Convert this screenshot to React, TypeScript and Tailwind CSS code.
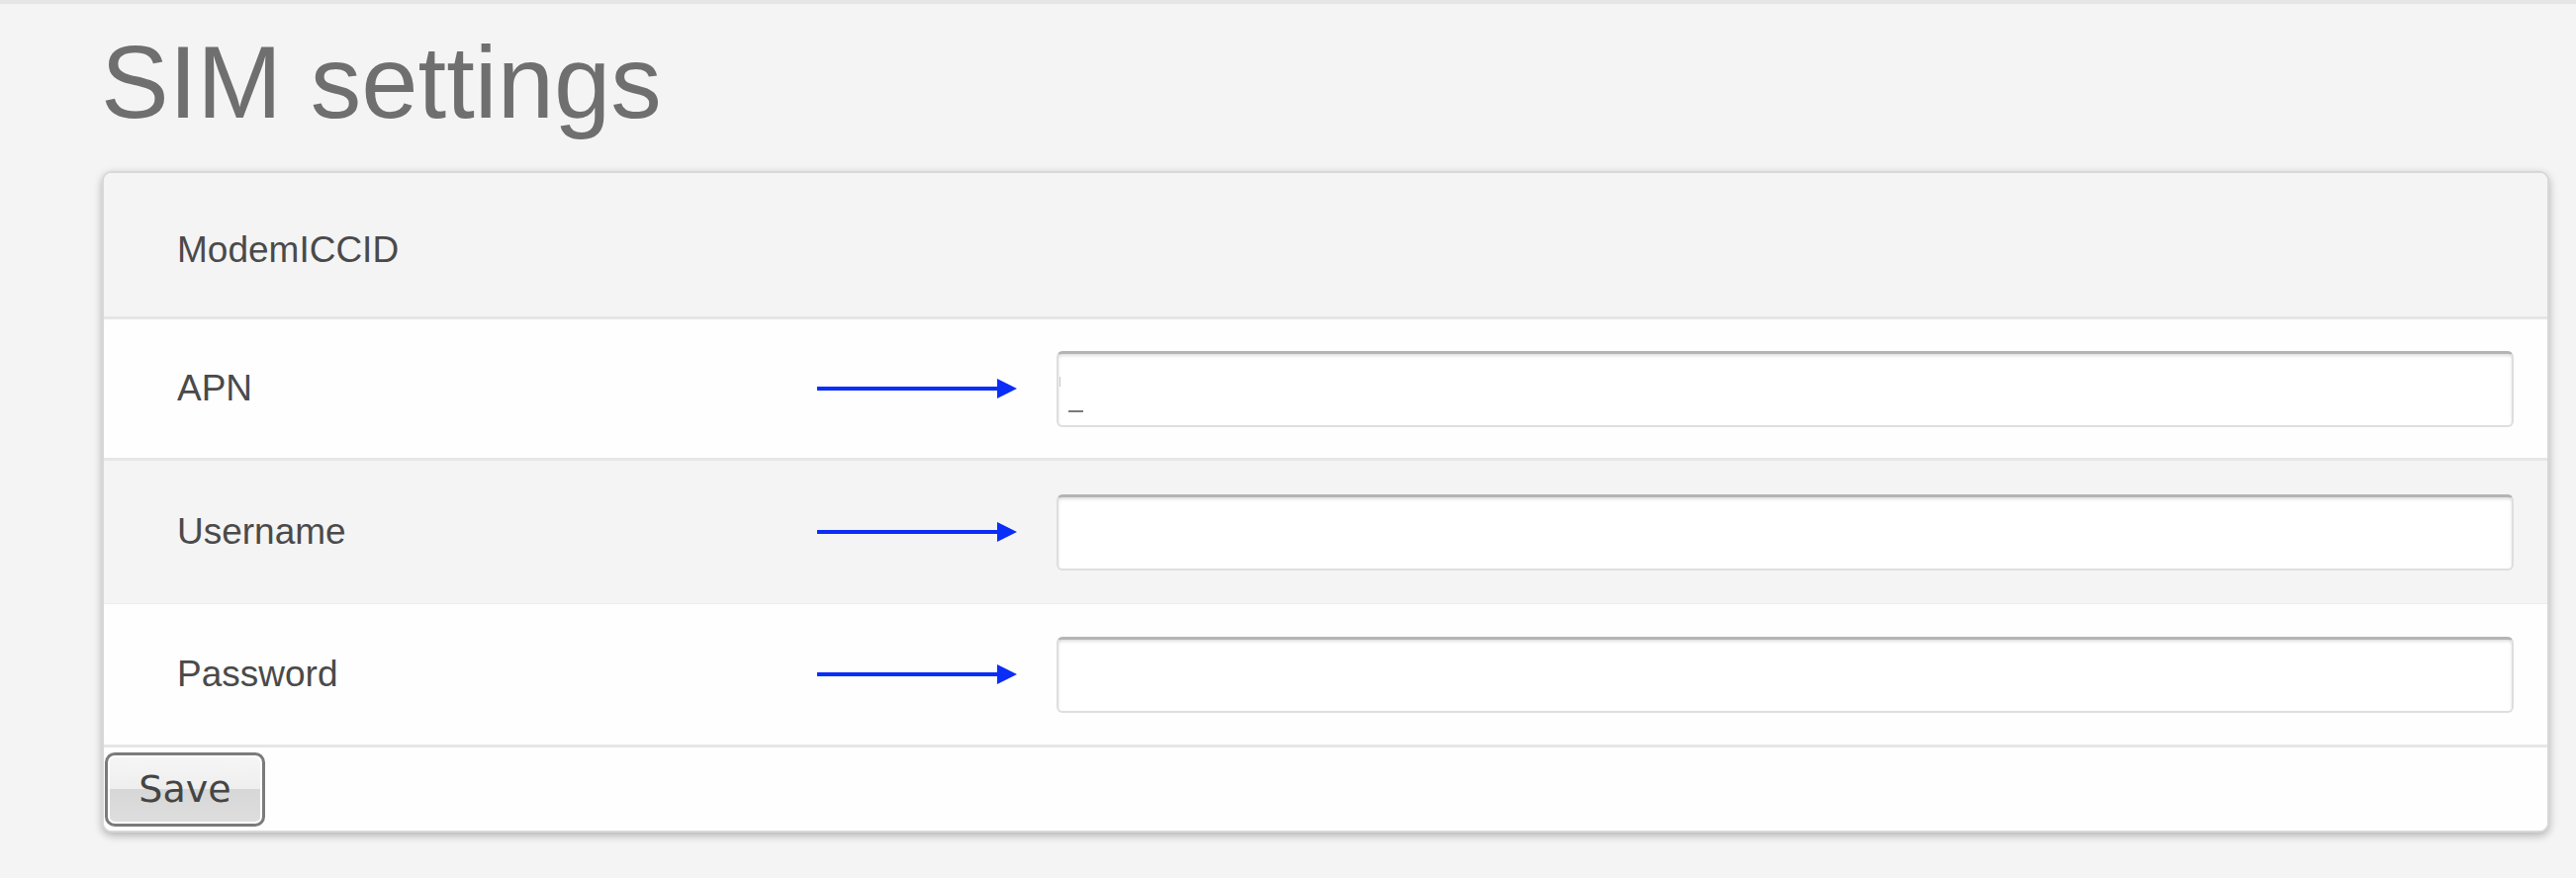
import React from 'react';

const Arrow: React.FC = () => (
    <svg width="202" height="24" viewBox="0 0 202 24" className="shrink-0">
        <line x1="0" y1="12" x2="184" y2="12" stroke="#0a2df8" strokeWidth="4" />
        <polygon points="182,2 202,12 182,22" fill="#0a2df8" />
    </svg>
);

const fields = [
    { label: 'APN', bg: 'bg-[#fefefe]', border: 'border-b-[3px] border-[#e6e6e6]', h: 'h-[143px]', caret: true },
    { label: 'Username', bg: 'bg-[#f4f4f4]', border: 'border-b border-[#ececec]', h: 'h-[145px]', caret: false },
    { label: 'Password', bg: 'bg-[#fefefe]', border: 'border-b-[3px] border-[#e6e6e6]', h: 'h-[145px]', caret: false },
];

const App: React.FC = () => {
    return (
        <div className="min-h-[888px] w-[2604px] bg-[#f4f4f4] font-['Liberation_Sans',Arial,sans-serif]">
            <div className="h-[4px] bg-[#e6e6e6]" />
            <h1 className="ml-[102px] mt-[28px] text-[103px] leading-[104px] font-normal text-[#6f6f6f]">SIM settings</h1>

            <div className="ml-[103px] mt-[37px] w-[2474px] rounded-[10px] border-2 border-[#d8d8d8] overflow-hidden bg-white shadow-[0_3px_8px_rgba(0,0,0,0.28)]">
                <div className="h-[148px] flex items-center pl-[74px] pt-[10px] bg-[#f4f4f4] border-b-[3px] border-[#e6e6e6] text-[37px] text-[#4a4a4a]">
                    ModemICCID
                </div>

                {fields.map((f) => (
                    <div key={f.label} className={`${f.h} ${f.bg} ${f.border} flex items-center pl-[74px] pr-[34px]`}>
                        <div className="w-[647px] text-[37px] text-[#4a4a4a]">{f.label}</div>
                        <Arrow />
                        <div className="relative ml-[40px] flex-1">
                            <input
                                type="text"
                                readOnly
                                className="block w-full h-[77px] rounded-[6px] bg-white border-2 border-[#dedede] border-t-[3px] border-t-[#b4b4b4] shadow-[inset_0_2px_3px_rgba(0,0,0,0.12)] outline-none"
                            />
                            {f.caret && (
                                <>
                                    <span className="absolute left-[3px] top-[26px] w-[1px] h-[10px] bg-[#c8c8c8]" />
                                    <span className="absolute left-[12px] top-[60px] w-[15px] h-[2px] bg-[#7a7a7a]" />
                                </>
                            )}
                        </div>
                    </div>
                ))}

                <div className="h-[84px] flex items-center pl-[1px] bg-[#fefefe]">
                    <button className="w-[162px] h-[75px] rounded-[10px] border-[3px] border-[#7b7b7b] bg-[linear-gradient(#f6f6f6_0%,#eeeeee_50%,#d7d7d7_50%,#dedede_100%)] shadow-[inset_0_0_0_2px_#ffffff] font-['DejaVu_Sans',sans-serif] text-[38px] leading-none text-[#454545]">
                        Save
                    </button>
                </div>
            </div>
        </div>
    );
};

export default App;
